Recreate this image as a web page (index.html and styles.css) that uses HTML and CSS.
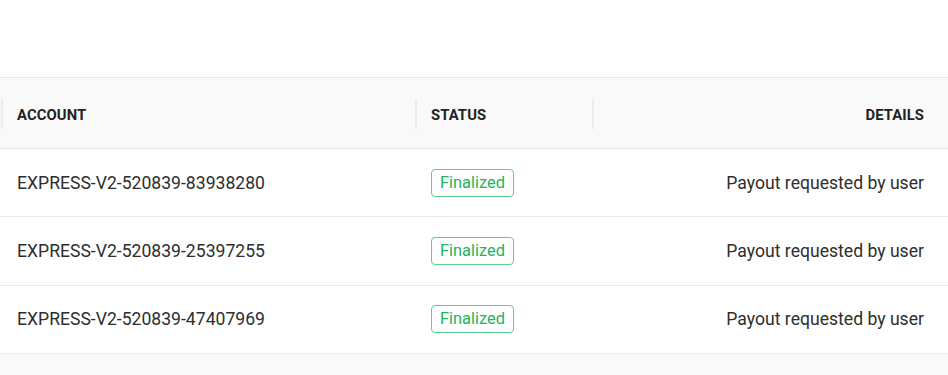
FILE: index.html
```html
<!DOCTYPE html>
<html>
<head>
<meta charset="utf-8">
<link rel="stylesheet" href="styles.css">
</head>
<body>
<div class="page">
  <div class="top"></div>
  <div class="table">
    <div class="row head">
      <div class="cell c-account"><span class="sep"></span>ACCOUNT</div>
      <div class="cell c-status"><span class="sep"></span>STATUS</div>
      <div class="cell c-details"><span class="sep"></span>DETAILS</div>
    </div>
    <div class="row">
      <div class="cell c-account">EXPRESS-V2-520839-83938280</div>
      <div class="cell c-status"><span class="badge">Finalized</span></div>
      <div class="cell c-details">Payout requested by user</div>
    </div>
    <div class="row">
      <div class="cell c-account">EXPRESS-V2-520839-25397255</div>
      <div class="cell c-status"><span class="badge">Finalized</span></div>
      <div class="cell c-details">Payout requested by user</div>
    </div>
    <div class="row">
      <div class="cell c-account">EXPRESS-V2-520839-47407969</div>
      <div class="cell c-status"><span class="badge">Finalized</span></div>
      <div class="cell c-details">Payout requested by user</div>
    </div>
  </div>
  <div class="bottom"></div>
</div>
</body>
</html>
```
FILE: styles.css
```css
html, body {
  margin: 0;
  padding: 0;
  background: #ffffff;
}
body {
  font-family: Roboto, "Liberation Sans", sans-serif;
  color: #2b2b2b;
}
.page {
  width: 948px;
  height: 375px;
  overflow: hidden;
  display: flex;
  flex-direction: column;
}
.top {
  height: 77px;
  flex: none;
  background: #ffffff;
}
.table {
  border-top: 1px solid #e3e6ea;
  flex: none;
}
.row {
  display: grid;
  grid-template-columns: 415px 177px 1fr;
  height: 67.33px;
  border-bottom: 1px solid #e8eaed;
  background: #ffffff;
  align-items: center;
}
.row.head {
  height: 70px;
  background: #f9f9f9;
  border-bottom: 1px solid #e3e6ea;
}
.cell {
  position: relative;
  font-size: 17.6px;
  color: #2e2e2e;
  padding: 0 16px;
  white-space: nowrap;
}
.c-account {
  padding-left: 17px;
}
.c-details {
  text-align: right;
  padding-right: 24px;
}
.head .cell {
  font-size: 14.8px;
  font-weight: 700;
  color: #222222;
  letter-spacing: 0.1px;
  line-height: 74px;
  height: 70px;
}
.sep {
  position: absolute;
  left: 0;
  top: 21px;
  width: 2px;
  height: 30px;
  background: #ececec;
}
.c-account .sep {
  left: 1px;
}
.badge {
  display: inline-block;
  box-sizing: border-box;
  height: 28px;
  line-height: 26px;
  padding: 0 8px;
  border: 1px solid #5ccf90;
  border-radius: 4px;
  color: #1fb35c;
  font-size: 16.4px;
  background: #ffffff;
}
.bottom {
  flex: 1;
  background: #f9f9f9;
}
```
